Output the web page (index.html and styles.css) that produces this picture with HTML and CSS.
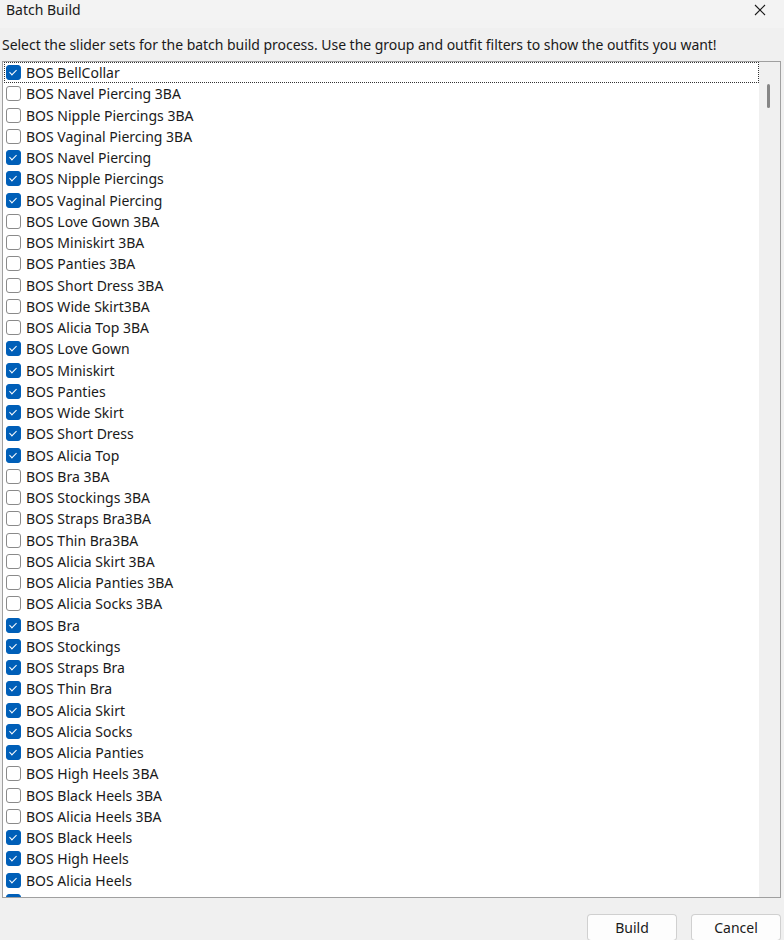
FILE: index.html
```html
<!DOCTYPE html>
<html lang="en">
<head>
    <meta charset="UTF-8">
    <title>Batch Build</title>
    <link rel="stylesheet" href="styles.css">
</head>
<body>

<div class="dialog">
    <div class="titlebar">
        <span class="title">Batch Build</span>
        <svg class="close" width="12" height="12" viewBox="0 0 12 12">
            <path d="M1 1 L11 11 M11 1 L1 11" stroke="#1a1a1a" stroke-width="1.1" fill="none"/>
        </svg>
    </div>

    <div class="content">
        <p class="hint">Select the slider sets for the batch build process. Use the group and outfit filters to show the outfits you want!</p>

        <div class="listbox">
            <ul class="items" id="items"></ul>
            <div class="scrollbar"><div class="thumb"></div></div>
        </div>

        <div class="buttons">
            <button class="btn build">Build</button>
            <button class="btn">Cancel</button>
        </div>
    </div>
</div>

<script>
    // name, checked
    const sets = [
        ['BOS BellCollar', 1],
        ['BOS Navel Piercing 3BA', 0],
        ['BOS Nipple Piercings 3BA', 0],
        ['BOS Vaginal Piercing 3BA', 0],
        ['BOS Navel Piercing', 1],
        ['BOS Nipple Piercings', 1],
        ['BOS Vaginal Piercing', 1],
        ['BOS Love Gown 3BA', 0],
        ['BOS Miniskirt 3BA', 0],
        ['BOS Panties 3BA', 0],
        ['BOS Short Dress 3BA', 0],
        ['BOS Wide Skirt3BA', 0],
        ['BOS Alicia Top 3BA', 0],
        ['BOS Love Gown', 1],
        ['BOS Miniskirt', 1],
        ['BOS Panties', 1],
        ['BOS Wide Skirt', 1],
        ['BOS Short Dress', 1],
        ['BOS Alicia Top', 1],
        ['BOS Bra 3BA', 0],
        ['BOS Stockings 3BA', 0],
        ['BOS Straps Bra3BA', 0],
        ['BOS Thin Bra3BA', 0],
        ['BOS Alicia Skirt 3BA', 0],
        ['BOS Alicia Panties 3BA', 0],
        ['BOS Alicia Socks 3BA', 0],
        ['BOS Bra', 1],
        ['BOS Stockings', 1],
        ['BOS Straps Bra', 1],
        ['BOS Thin Bra', 1],
        ['BOS Alicia Skirt', 1],
        ['BOS Alicia Socks', 1],
        ['BOS Alicia Panties', 1],
        ['BOS High Heels 3BA', 0],
        ['BOS Black Heels 3BA', 0],
        ['BOS Alicia Heels 3BA', 0],
        ['BOS Black Heels', 1],
        ['BOS High Heels', 1],
        ['BOS Alicia Heels', 1],
        ['BOS Bow Boots 3BA', 1]
    ];

    const list = document.getElementById('items');
    sets.forEach(([name, checked], i) => {
        const li = document.createElement('li');
        li.className = 'item' + (i === 0 ? ' focused' : '');
        li.innerHTML = `<span class="box${checked ? ' checked' : ''}"></span><span class="label">${name}</span>`;
        list.appendChild(li);
    });
</script>

</body>
</html>
```

FILE: styles.css
```css
body {
    margin: 0;
    background-color: #f0f0f0;
    font-family: "Noto Sans", "Open Sans", sans-serif;
    color: #1a1a1a;
    overflow: hidden;
}
.dialog {
    width: 784px;
    height: 940px;
    display: flex;
    flex-direction: column;
}
.titlebar {
    height: 28px;
    box-sizing: border-box;
    flex: none;
    display: flex;
    align-items: flex-start;
    justify-content: space-between;
    padding: 0 18px 0 6px;
    background-color: #f3f3f3;
    font-size: 14px;
    line-height: 20px;
}
.close {
    margin-top: 4px;
}
.content {
    padding: 0 3px 0 2px;
}
.hint {
    margin: 7px 0 0;
    font-size: 14px;
    line-height: 20px;
    letter-spacing: -0.03px;
}
.listbox {
    margin-top: 6px;
    height: 835px;
    border: 1px solid #a0a0a0;
    background-color: white;
    display: flex;
    overflow: hidden;
}
.items {
    list-style: none;
    margin: 0;
    padding: 0 0 0 1px;
    flex: 1;
}
.item {
    height: 21.25px;
    display: flex;
    align-items: center;
    font-size: 14px;
    box-sizing: border-box;
    border: 1px dotted transparent;
}
.item.focused {
    border-color: #333;
}
.box {
    width: 13px;
    height: 13px;
    margin: 0 5px 0 1px;
    border: 1px solid #8a8a8a;
    border-radius: 3px;
    background-color: white;
    position: relative;
    flex: none;
}
.box.checked {
    background-color: #005fb8;
    border-color: #005fb8;
}
.box.checked::after {
    content: "";
    position: absolute;
    left: 4px;
    top: 2px;
    width: 3px;
    height: 6px;
    border: solid white;
    border-width: 0 1.3px 1.3px 0;
    transform: rotate(45deg);
}
.scrollbar {
    width: 21px;
    flex: none;
    background-color: #f0f0f0;
    position: relative;
}
.thumb {
    position: absolute;
    left: 8px;
    top: 22px;
    width: 3px;
    height: 24px;
    border-radius: 2px;
    background-color: #868686;
}
.buttons {
    display: flex;
    justify-content: flex-end;
    gap: 14px;
    margin-top: 16px;
}
.btn {
    width: 90px;
    height: 27px;
    border: 1px solid #d0d0d0;
    border-bottom-color: #c0c0c0;
    border-radius: 4px;
    background-color: #fdfdfd;
    font-family: inherit;
    font-size: 14px;
    color: #1a1a1a;
}
```
